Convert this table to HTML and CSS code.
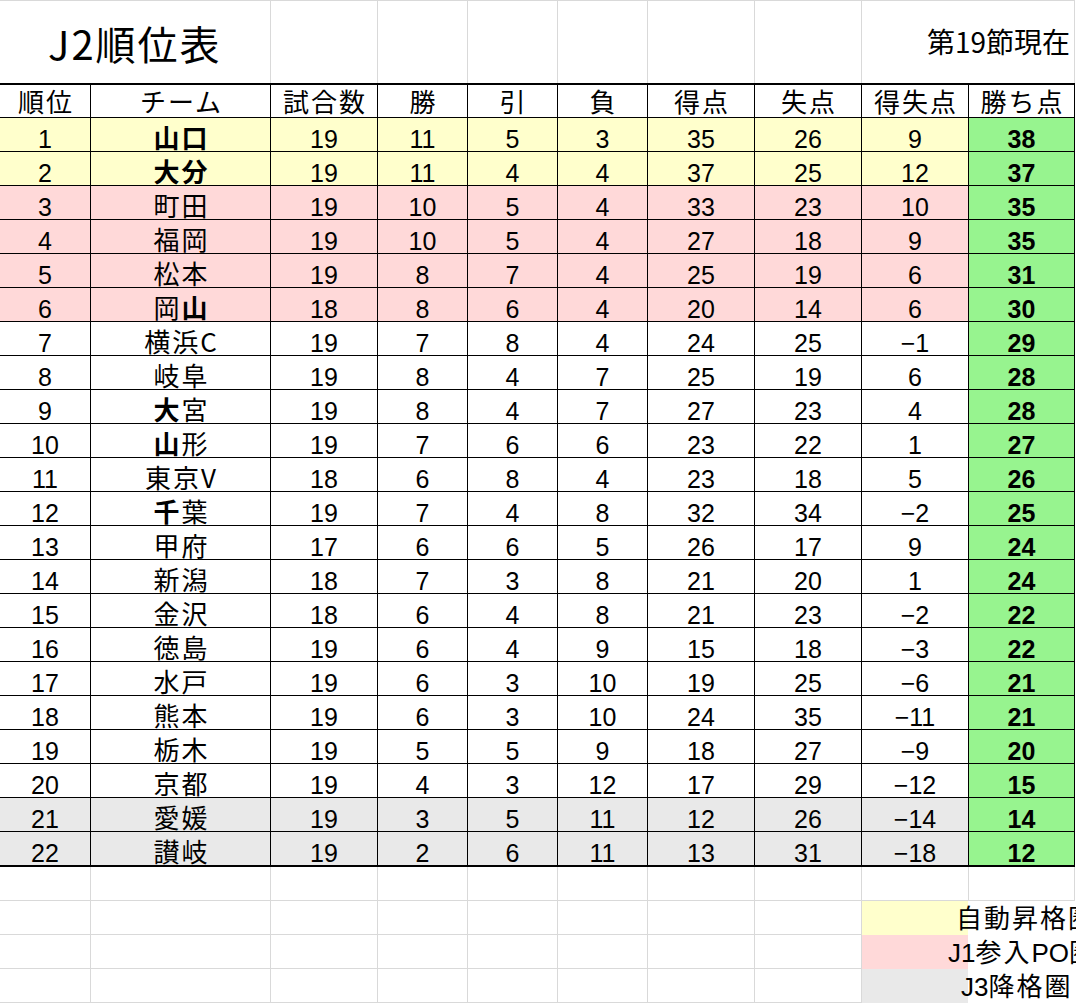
FILE: index.html
```html
<!DOCTYPE html>
<html lang="ja">
<head>
<meta charset="utf-8">
<title>J2順位表</title>
<link rel="stylesheet" href="styles.css">
</head>
<body>
<div class="sheet">
  <div class="row top">
    <div class="c title">J2順位表</div>
    <div class="c"></div>
    <div class="c"></div>
    <div class="c"></div>
    <div class="c"></div>
    <div class="c"></div>
    <div class="c"></div>
    <div class="c date">第19節現在</div>
  </div>

  <div class="row head">
    <div class="c t">順位</div>
    <div class="c t">チーム</div>
    <div class="c t">試合数</div>
    <div class="c t">勝</div>
    <div class="c t">引</div>
    <div class="c t">負</div>
    <div class="c t">得点</div>
    <div class="c t">失点</div>
    <div class="c t">得失点</div>
    <div class="c t">勝ち点</div>
  </div>

  <div class="row y"><div class="c">1</div><div class="c t"><b>山口</b></div><div class="c">19</div><div class="c">11</div><div class="c">5</div><div class="c">3</div><div class="c">35</div><div class="c">26</div><div class="c">9</div><div class="c pts">38</div></div>
  <div class="row y"><div class="c">2</div><div class="c t"><b>大分</b></div><div class="c">19</div><div class="c">11</div><div class="c">4</div><div class="c">4</div><div class="c">37</div><div class="c">25</div><div class="c">12</div><div class="c pts">37</div></div>
  <div class="row p"><div class="c">3</div><div class="c t">町田</div><div class="c">19</div><div class="c">10</div><div class="c">5</div><div class="c">4</div><div class="c">33</div><div class="c">23</div><div class="c">10</div><div class="c pts">35</div></div>
  <div class="row p"><div class="c">4</div><div class="c t">福岡</div><div class="c">19</div><div class="c">10</div><div class="c">5</div><div class="c">4</div><div class="c">27</div><div class="c">18</div><div class="c">9</div><div class="c pts">35</div></div>
  <div class="row p"><div class="c">5</div><div class="c t">松本</div><div class="c">19</div><div class="c">8</div><div class="c">7</div><div class="c">4</div><div class="c">25</div><div class="c">19</div><div class="c">6</div><div class="c pts">31</div></div>
  <div class="row p"><div class="c">6</div><div class="c t">岡<b>山</b></div><div class="c">18</div><div class="c">8</div><div class="c">6</div><div class="c">4</div><div class="c">20</div><div class="c">14</div><div class="c">6</div><div class="c pts">30</div></div>
  <div class="row"><div class="c">7</div><div class="c t">横浜C</div><div class="c">19</div><div class="c">7</div><div class="c">8</div><div class="c">4</div><div class="c">24</div><div class="c">25</div><div class="c">−1</div><div class="c pts">29</div></div>
  <div class="row"><div class="c">8</div><div class="c t">岐阜</div><div class="c">19</div><div class="c">8</div><div class="c">4</div><div class="c">7</div><div class="c">25</div><div class="c">19</div><div class="c">6</div><div class="c pts">28</div></div>
  <div class="row"><div class="c">9</div><div class="c t"><b>大</b>宮</div><div class="c">19</div><div class="c">8</div><div class="c">4</div><div class="c">7</div><div class="c">27</div><div class="c">23</div><div class="c">4</div><div class="c pts">28</div></div>
  <div class="row"><div class="c">10</div><div class="c t"><b>山</b>形</div><div class="c">19</div><div class="c">7</div><div class="c">6</div><div class="c">6</div><div class="c">23</div><div class="c">22</div><div class="c">1</div><div class="c pts">27</div></div>
  <div class="row"><div class="c">11</div><div class="c t">東京V</div><div class="c">18</div><div class="c">6</div><div class="c">8</div><div class="c">4</div><div class="c">23</div><div class="c">18</div><div class="c">5</div><div class="c pts">26</div></div>
  <div class="row"><div class="c">12</div><div class="c t"><b>千</b>葉</div><div class="c">19</div><div class="c">7</div><div class="c">4</div><div class="c">8</div><div class="c">32</div><div class="c">34</div><div class="c">−2</div><div class="c pts">25</div></div>
  <div class="row"><div class="c">13</div><div class="c t">甲府</div><div class="c">17</div><div class="c">6</div><div class="c">6</div><div class="c">5</div><div class="c">26</div><div class="c">17</div><div class="c">9</div><div class="c pts">24</div></div>
  <div class="row"><div class="c">14</div><div class="c t">新潟</div><div class="c">18</div><div class="c">7</div><div class="c">3</div><div class="c">8</div><div class="c">21</div><div class="c">20</div><div class="c">1</div><div class="c pts">24</div></div>
  <div class="row"><div class="c">15</div><div class="c t">金沢</div><div class="c">18</div><div class="c">6</div><div class="c">4</div><div class="c">8</div><div class="c">21</div><div class="c">23</div><div class="c">−2</div><div class="c pts">22</div></div>
  <div class="row"><div class="c">16</div><div class="c t">徳島</div><div class="c">19</div><div class="c">6</div><div class="c">4</div><div class="c">9</div><div class="c">15</div><div class="c">18</div><div class="c">−3</div><div class="c pts">22</div></div>
  <div class="row"><div class="c">17</div><div class="c t">水戸</div><div class="c">19</div><div class="c">6</div><div class="c">3</div><div class="c">10</div><div class="c">19</div><div class="c">25</div><div class="c">−6</div><div class="c pts">21</div></div>
  <div class="row"><div class="c">18</div><div class="c t">熊本</div><div class="c">19</div><div class="c">6</div><div class="c">3</div><div class="c">10</div><div class="c">24</div><div class="c">35</div><div class="c">−11</div><div class="c pts">21</div></div>
  <div class="row"><div class="c">19</div><div class="c t">栃木</div><div class="c">19</div><div class="c">5</div><div class="c">5</div><div class="c">9</div><div class="c">18</div><div class="c">27</div><div class="c">−9</div><div class="c pts">20</div></div>
  <div class="row"><div class="c">20</div><div class="c t">京都</div><div class="c">19</div><div class="c">4</div><div class="c">3</div><div class="c">12</div><div class="c">17</div><div class="c">29</div><div class="c">−12</div><div class="c pts">15</div></div>
  <div class="row g"><div class="c">21</div><div class="c t">愛媛</div><div class="c">19</div><div class="c">3</div><div class="c">5</div><div class="c">11</div><div class="c">12</div><div class="c">26</div><div class="c">−14</div><div class="c pts">14</div></div>
  <div class="row g last"><div class="c">22</div><div class="c t">讃岐</div><div class="c">19</div><div class="c">2</div><div class="c">6</div><div class="c">11</div><div class="c">13</div><div class="c">31</div><div class="c">−18</div><div class="c pts">12</div></div>

  <div class="row blank">
    <div class="c"></div><div class="c"></div><div class="c"></div><div class="c"></div><div class="c"></div>
    <div class="c"></div><div class="c"></div><div class="c"></div><div class="c"></div><div class="c"></div>
  </div>
  <div class="row blank">
    <div class="c"></div><div class="c"></div><div class="c"></div><div class="c"></div><div class="c"></div>
    <div class="c"></div><div class="c"></div><div class="c"></div>
    <div class="legend lg-y">自動昇格圏</div>
  </div>
  <div class="row blank">
    <div class="c"></div><div class="c"></div><div class="c"></div><div class="c"></div><div class="c"></div>
    <div class="c"></div><div class="c"></div><div class="c"></div>
    <div class="legend lg-p"><span class="lat">J1</span>参入<span class="lat">PO</span>圏</div>
  </div>
  <div class="row blank">
    <div class="c"></div><div class="c"></div><div class="c"></div><div class="c"></div><div class="c"></div>
    <div class="c"></div><div class="c"></div><div class="c"></div>
    <div class="legend lg-g"><span class="lat">J3</span>降格圏</div>
  </div>
</div>
</body>
</html>
```

FILE: styles.css
```css
html, body {
  margin: 0;
  padding: 0;
  overflow: hidden;
  background: #ffffff;
}

body {
  width: 1076px;
  height: 1004px;
  font-family: "Liberation Sans", "Noto Sans CJK JP", sans-serif;
  color: #000000;
}

.sheet {
  width: 1076px;
}

.row {
  display: grid;
  grid-template-columns: 91px 180px 107px 90px 90px 90px 107px 107px 107px 106px;
}

.c {
  box-sizing: border-box;
  height: 34px;
  padding-top: 9px;
  border-right: 1px solid #000000;
  border-bottom: 1px solid #000000;
  font-size: 25px;
  line-height: 24px;
  text-align: center;
  white-space: nowrap;
}

.t {
  font-family: "Noto Sans CJK JP", sans-serif;
  font-size: 26px;
  line-height: 26px;
  letter-spacing: 2px;
  padding-left: 2px;
  padding-top: 6px;
}

.t b {
  font-weight: 700;
}

/* title row */
.top .c {
  height: 83px;
  padding-top: 0;
  border-top: 1px solid #d9d9d9;
  border-right: 1px solid #d9d9d9;
  border-bottom: none;
}

.top .title {
  grid-column: span 2;
  font-family: "Noto Sans CJK JP", sans-serif;
  font-size: 40px;
  line-height: 40px;
  letter-spacing: 2px;
  text-align: left;
  padding-left: 48px;
  padding-top: 22px;
}

.top .date {
  grid-column: span 2;
  font-family: "Noto Sans CJK JP", sans-serif;
  font-size: 28px;
  line-height: 28px;
  text-align: right;
  padding-right: 4px;
  padding-top: 26px;
}

/* header row */
.head .c {
  height: 35px;
  border-top: 2px solid #000000;
  padding-top: 3px;
}

/* row fills */
.y .c { background: #ffffcc; }
.p .c { background: #ffd9d9; }
.g .c { background: #e9e9e9; }

.row .pts {
  background: #97f48f;
  font-weight: 700;
}

.last .c {
  height: 35px;
  border-bottom: 2px solid #000000;
}

/* blank rows below table */
.blank .c {
  border-right: 1px solid #d9d9d9;
  border-bottom: 1px solid #d9d9d9;
  padding-top: 0;
}

.legend {
  grid-column: span 2;
  box-sizing: border-box;
  height: 34px;
  padding-top: 3px;
  font-family: "Noto Sans CJK JP", sans-serif;
  font-size: 26px;
  line-height: 26px;
  letter-spacing: 2px;
  white-space: nowrap;
}

.legend .lat {
  font-family: "Liberation Sans", sans-serif;
  letter-spacing: 0;
}

.lg-y {
  padding-left: 94px;
  background: linear-gradient(to right, #ffffcc 0, #ffffcc 106px, #ffffff 106px);
}

.lg-p {
  padding-left: 86px;
  background: linear-gradient(to right, #ffd9d9 0, #ffd9d9 106px, #ffffff 106px);
}

.lg-g {
  padding-left: 99px;
  background: linear-gradient(to right, #e9e9e9 0, #e9e9e9 106px, #ffffff 106px);
}
```
